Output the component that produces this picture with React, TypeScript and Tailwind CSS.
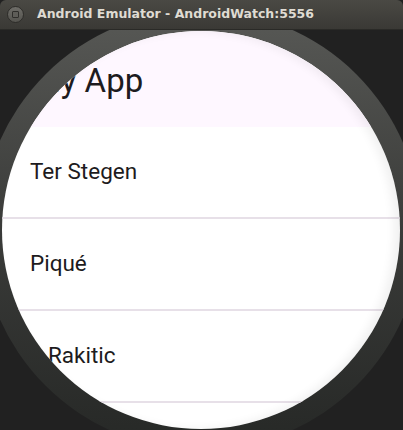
const players = [
  { name: "Ter Stegen", indent: "pl-[28px]" },
  { name: "Piqué", indent: "pl-[28px]" },
  { name: "Rakitic", indent: "pl-[46px]" },
];

export default function App() {
  return (
    <div className="relative w-[403px] h-[430px] overflow-hidden bg-[#212121]">
      {/* window title bar */}
      <div className="relative z-20 h-[30px] rounded-t-[6px] bg-gradient-to-b from-[#4a4944] to-[#3a3935] border-b border-[#2a2a27] flex items-center pl-[7px] gap-[13px]">
        <div className="w-[17px] h-[17px] rounded-full bg-gradient-to-b from-[#6e6d68] to-[#55544f] border border-[#2e2d2a] flex items-center justify-center">
          <div className="w-[7px] h-[7px] rounded-[1px] border border-[#2f2e2b] bg-[#5e5d58]" />
        </div>
        <span className="text-[12.5px] font-bold text-[#dfdbd2] [font-family:'DejaVu_Sans',sans-serif]">
          Android Emulator - AndroidWatch:5556
        </span>
      </div>

      {/* watch bezel */}
      <div className="absolute left-[-19px] top-[10px] w-[440px] h-[440px] rounded-full bg-gradient-to-b from-[#585956] via-[#3a3b39] to-[#262826]" />

      {/* round screen */}
      <div className="absolute left-[2px] top-[31px] w-[398px] h-[398px] rounded-full overflow-hidden bg-white [font-family:Roboto,sans-serif]">
        <div className="h-[96px] bg-[#fef7ff] flex items-end pl-[30px] pb-[30px]">
          <span className="text-[33px] leading-none text-[#1d1b20]">My App</span>
        </div>
        {players.map((p) => (
          <div key={p.name}>
            <div className={`h-[90px] flex items-center ${p.indent}`}>
              <span className="text-[22.5px] text-[#1d1b20]">{p.name}</span>
            </div>
            <div className="h-[2px] bg-[#e7e0e8]" />
          </div>
        ))}
        <div className="pointer-events-none absolute inset-0 rounded-full shadow-[inset_-6px_0_10px_rgba(0,0,0,0.06)]" />
      </div>
    </div>
  );
}
